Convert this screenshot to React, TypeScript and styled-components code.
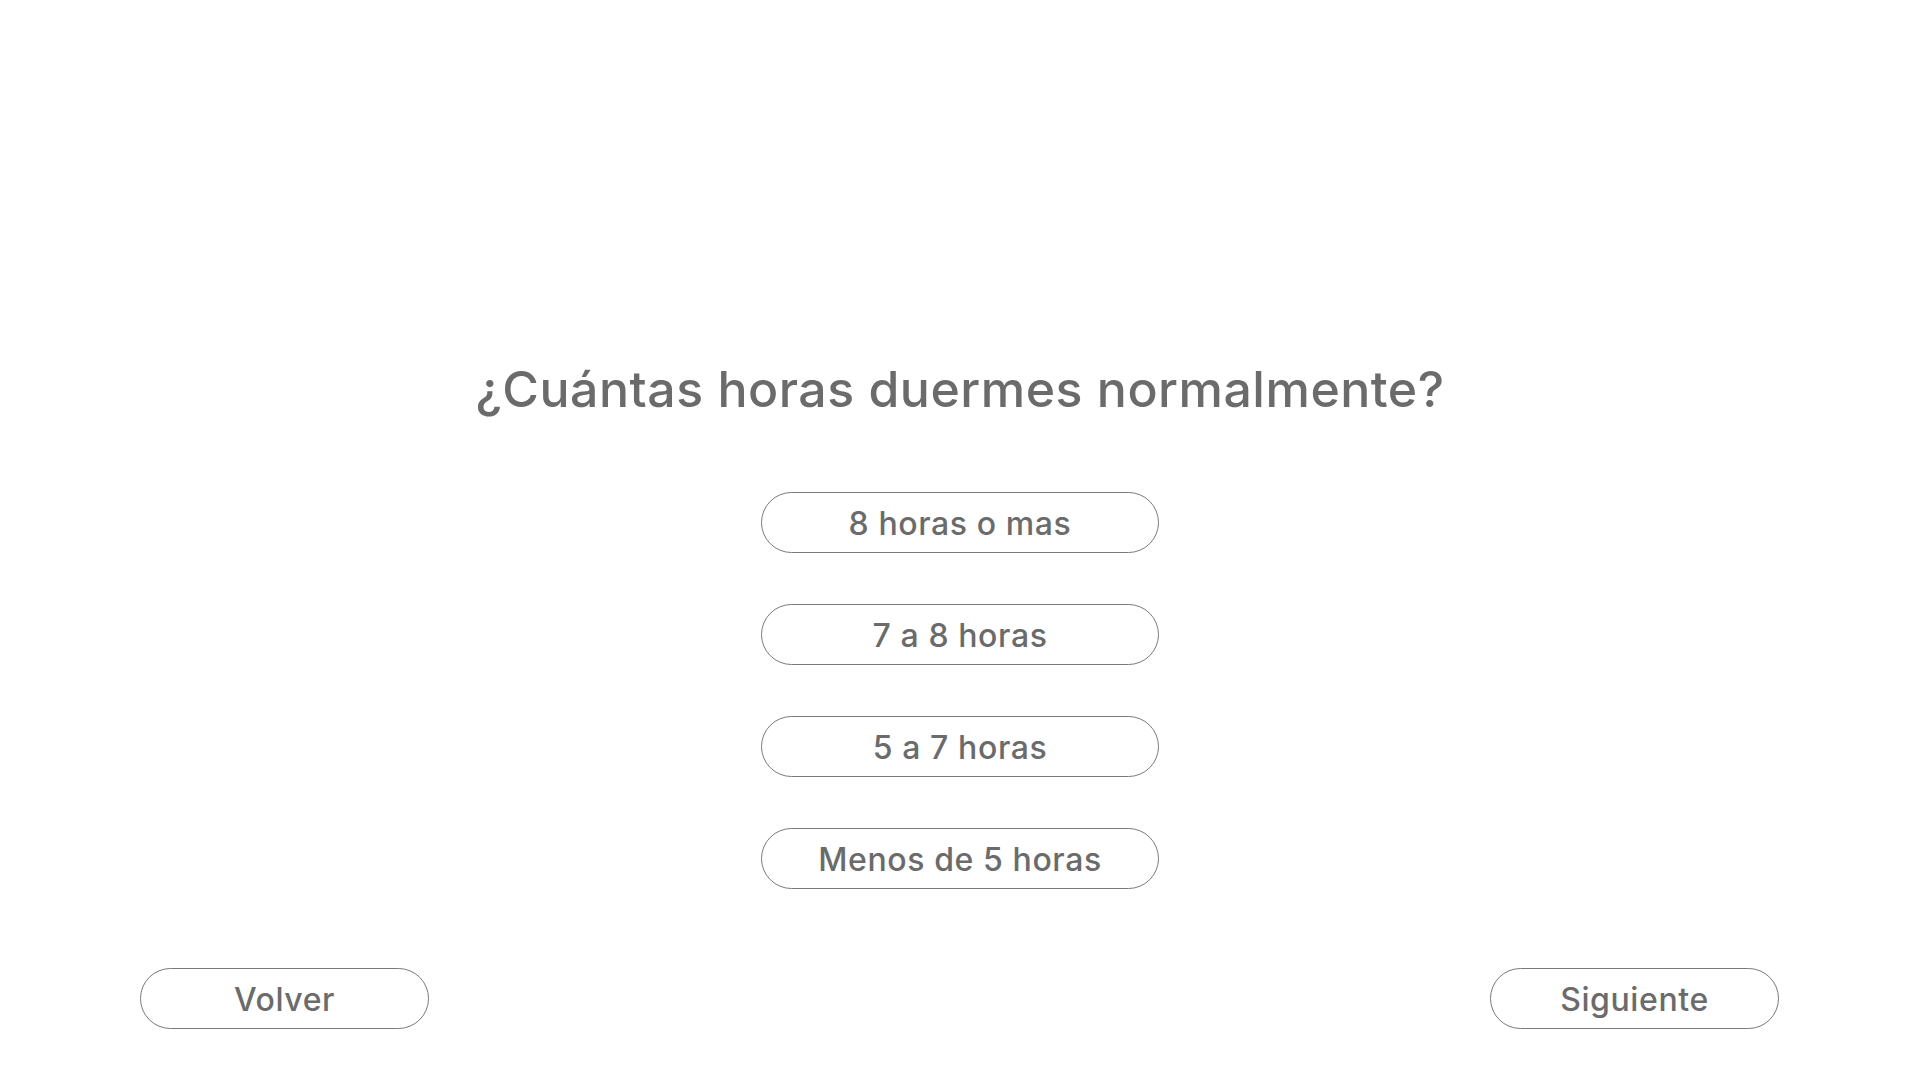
import styled, { createGlobalStyle } from "styled-components";

const GlobalStyle = createGlobalStyle`
  html, body {
    margin: 0;
    padding: 0;
    background: #ffffff;
  }
  body {
    font-family: "Inter", "Open Sans", "Liberation Sans", sans-serif;
    color: #6b6b6b;
  }
`;

const Page = styled.div`
  width: 1920px;
  height: 1080px;
  display: flex;
  flex-direction: column;
  align-items: center;
  box-sizing: border-box;
  padding-top: 360px;
`;

const Title = styled.h1`
  margin: 0;
  font-size: 50px;
  line-height: 58px;
  font-weight: 500;
  color: #6b6b6b;
  letter-spacing: 0.5px;
`;

const OptionList = styled.div`
  display: flex;
  flex-direction: column;
  gap: 51px;
  margin-top: 74px;
`;

const PillButton = styled.button<{ $width: number }>`
  width: ${(p) => p.$width}px;
  height: 61px;
  box-sizing: border-box;
  border: 1px solid #7a7a7a;
  border-radius: 31px;
  background: #ffffff;
  font-family: "Inter", "Open Sans", "Liberation Sans", sans-serif;
  font-size: 32px;
  font-weight: 500;
  color: #6b6b6b;
  letter-spacing: 0.6px;
  padding: 1px 0 0;
  cursor: pointer;
`;

const Footer = styled.div`
  width: 100%;
  box-sizing: border-box;
  display: flex;
  justify-content: space-between;
  padding: 0 141px 0 140px;
  margin-top: 79px;
`;

const options = ["8 horas o mas", "7 a 8 horas", "5 a 7 horas", "Menos de 5 horas"];

const App = () => {
  return (
    <Page>
      <GlobalStyle />
      <Title>¿Cuántas horas duermes normalmente?</Title>
      <OptionList>
        {options.map((option) => (
          <PillButton key={option} $width={398}>
            {option}
          </PillButton>
        ))}
      </OptionList>
      <Footer>
        <PillButton $width={289}>Volver</PillButton>
        <PillButton $width={289}>Siguiente</PillButton>
      </Footer>
    </Page>
  );
};

export default App;
